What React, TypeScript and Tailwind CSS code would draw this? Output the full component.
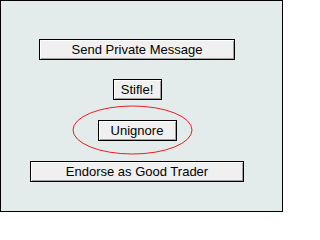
const btn =
  "flex items-center justify-center h-[21px] border border-black bg-[#f0f0f0] text-black text-[13px] leading-none shadow-[inset_1px_1px_0_#ffffff,inset_-1px_-1px_0_#a0a0a0]";

export default function App() {
  return (
    <div className="relative w-[283px] h-[212px] overflow-hidden border border-black bg-[#e3ecea] font-['Liberation_Sans',Arial,sans-serif]">
      <div className="flex flex-col items-center w-[272px] pt-[38px]">
        <button className={`${btn} w-[196px]`}>Send Private Message</button>
        <button className={`${btn} w-[49px] mt-[19px]`}>Stifle!</button>
        <button className={`${btn} w-[79px] mt-[20px]`}>Unignore</button>
        <button className={`${btn} w-[214px] mt-[20px]`}>Endorse as Good Trader</button>
      </div>
      <svg className="absolute left-[71px] top-[104px]" width="122" height="51" viewBox="0 0 122 51">
        <ellipse cx="60.5" cy="25" rx="59.5" ry="24" fill="none" stroke="#ee1c24" strokeWidth="1" />
      </svg>
    </div>
  );
}
